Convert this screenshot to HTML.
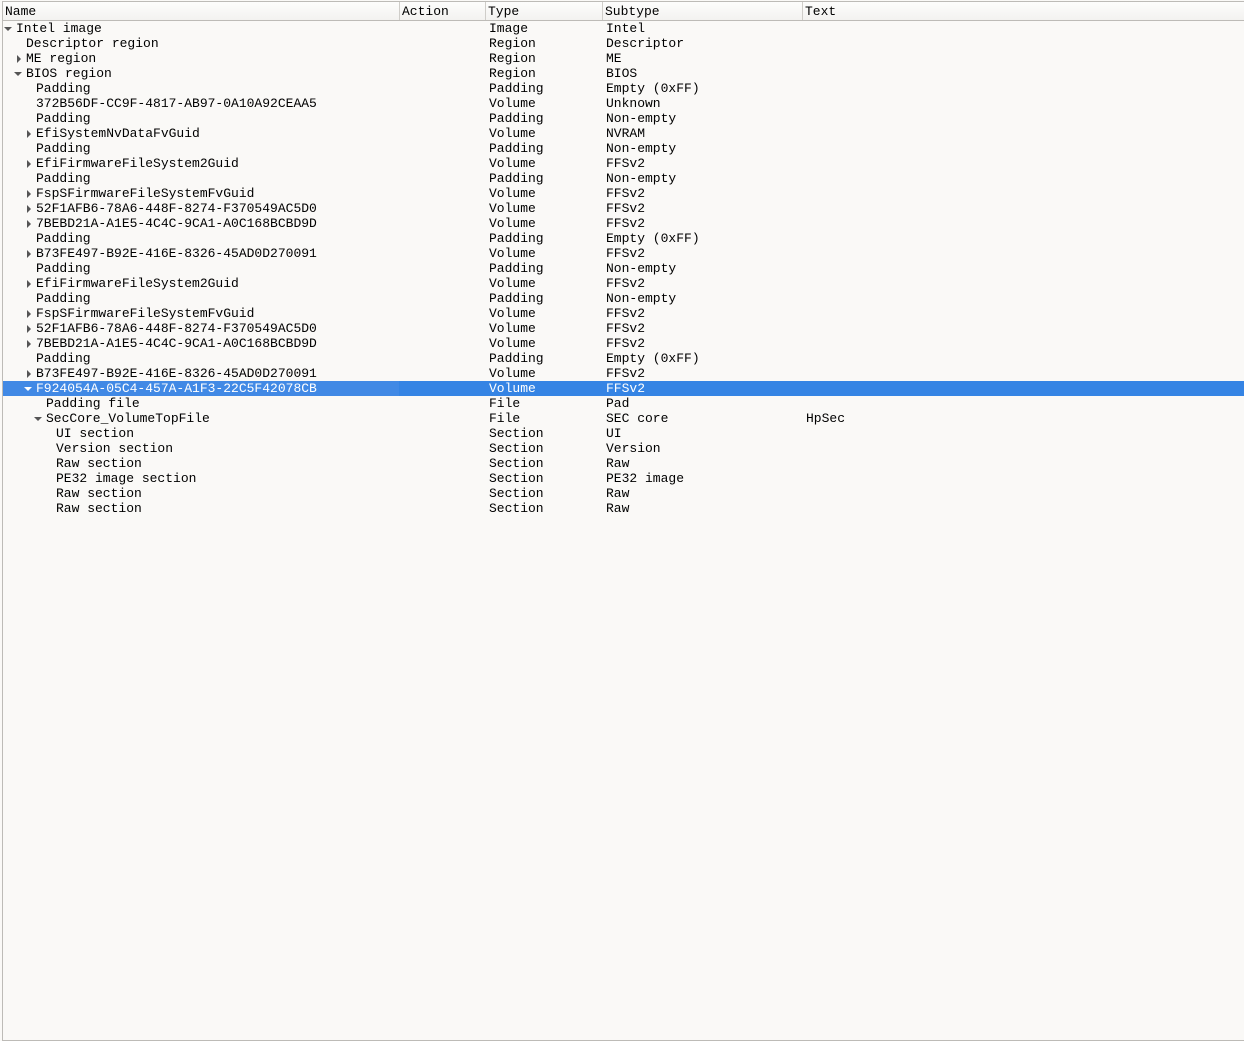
<!DOCTYPE html><html><head><style>
body{margin:0;width:1244px;height:1041px;background:#faf9f7;position:relative;overflow:hidden;font-family:"Liberation Mono",monospace;font-size:13px;color:#000}
.frame{position:absolute;left:2px;top:1px;width:1250px;height:1038px;border:1px solid #bdbbb7;border-right:none}
.hdr{position:absolute;left:3px;top:2px;width:1241px;height:18px;background:linear-gradient(#fdfdfc,#f3f2f0);border-bottom:1px solid #bdbbb7}
.hc{position:absolute;top:0;height:18px;line-height:19px;padding-left:2px;border-right:1px solid #cfcdc9}
.r{position:absolute;left:3px;width:1241px;height:15px;line-height:15px;white-space:pre}
.r span{position:absolute;top:0}
.sel{background:#3584e4;color:#fff}
.sel .nm{background:#4189e5}
.ad{position:absolute;width:0;height:0;border-left:4px solid transparent;border-right:4px solid transparent;border-top:4px solid #555;top:6px}
.ar{position:absolute;width:0;height:0;border-top:4px solid transparent;border-bottom:4px solid transparent;border-left:4px solid #555;top:4px}
.sel .ad{border-top-color:#fff}
</style></head><body>
<div class="frame"></div>
<div class="hdr">
<div class="hc" style="left:0;width:394px">Name</div>
<div class="hc" style="left:397px;width:83px">Action</div>
<div class="hc" style="left:483px;width:114px">Type</div>
<div class="hc" style="left:600px;width:197px">Subtype</div>
<div class="hc" style="left:800px;width:439px;border-right:none">Text</div>
</div>
<div id="rows"></div>
<script>
var d=[[0,'d','Intel image','Image','Intel',''],[1,'','Descriptor region','Region','Descriptor',''],[1,'r','ME region','Region','ME',''],[1,'d','BIOS region','Region','BIOS',''],
[2,'','Padding','Padding','Empty (0xFF)',''],[2,'','372B56DF-CC9F-4817-AB97-0A10A92CEAA5','Volume','Unknown',''],[2,'','Padding','Padding','Non-empty',''],
[2,'r','EfiSystemNvDataFvGuid','Volume','NVRAM',''],[2,'','Padding','Padding','Non-empty',''],[2,'r','EfiFirmwareFileSystem2Guid','Volume','FFSv2',''],
[2,'','Padding','Padding','Non-empty',''],[2,'r','FspSFirmwareFileSystemFvGuid','Volume','FFSv2',''],[2,'r','52F1AFB6-78A6-448F-8274-F370549AC5D0','Volume','FFSv2',''],
[2,'r','7BEBD21A-A1E5-4C4C-9CA1-A0C168BCBD9D','Volume','FFSv2',''],[2,'','Padding','Padding','Empty (0xFF)',''],[2,'r','B73FE497-B92E-416E-8326-45AD0D270091','Volume','FFSv2',''],
[2,'','Padding','Padding','Non-empty',''],[2,'r','EfiFirmwareFileSystem2Guid','Volume','FFSv2',''],[2,'','Padding','Padding','Non-empty',''],
[2,'r','FspSFirmwareFileSystemFvGuid','Volume','FFSv2',''],[2,'r','52F1AFB6-78A6-448F-8274-F370549AC5D0','Volume','FFSv2',''],[2,'r','7BEBD21A-A1E5-4C4C-9CA1-A0C168BCBD9D','Volume','FFSv2',''],
[2,'','Padding','Padding','Empty (0xFF)',''],[2,'r','B73FE497-B92E-416E-8326-45AD0D270091','Volume','FFSv2',''],[2,'d','F924054A-05C4-457A-A1F3-22C5F42078CB','Volume','FFSv2','',1],
[3,'','Padding file','File','Pad',''],[3,'d','SecCore_VolumeTopFile','File','SEC core','HpSec'],[4,'','UI section','Section','UI',''],[4,'','Version section','Section','Version',''],
[4,'','Raw section','Section','Raw',''],[4,'','PE32 image section','Section','PE32 image',''],[4,'','Raw section','Section','Raw',''],[4,'','Raw section','Section','Raw','']];
var h='';d.forEach(function(e,i){var tx=13+10*e[0];var a='';
if(e[1]=='d')a='<i class="ad" style="left:'+(tx-12)+'px"></i>';if(e[1]=='r')a='<i class="ar" style="left:'+(tx-9)+'px"></i>';
h+='<div class="r'+(e[6]?' sel':'')+'" style="top:'+(21+15*i)+'px">'+(e[6]?'<span class="nm" style="left:0;width:396px;height:15px"></span>':'')+a+'<span style="left:'+tx+'px">'+e[2]+'</span><span style="left:486px">'+e[3]+'</span><span style="left:603px">'+e[4]+'</span><span style="left:803px">'+e[5]+'</span></div>';});
document.getElementById('rows').innerHTML=h;
</script>
</body></html>
